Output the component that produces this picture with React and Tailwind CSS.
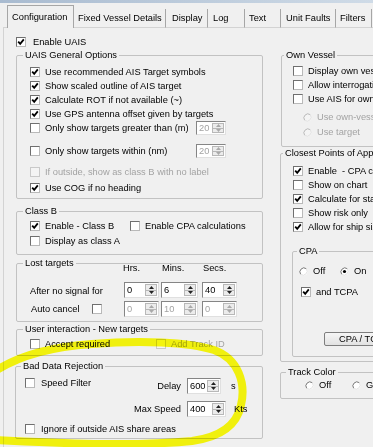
import clsx from "clsx"

function Check({ checked, disabled }) {
  return (
    <span
      className={clsx(
        "relative flex w-[10px] h-[10px] shrink-0 border",
        disabled
          ? "border-[#c9c9c9] bg-[#f4f4f4]"
          : "border-t-[#6f6f6f] border-l-[#6f6f6f] border-b-[#b9b9b9] border-r-[#b9b9b9] bg-white"
      )}
    >
      {checked ? (
        <svg width="8" height="8" viewBox="0 0 8 8" className="absolute left-0 top-0">
          <path d="M1.2 3.6 L3.2 5.8 L6.8 1.4" stroke="#000" strokeWidth="1.8" fill="none" />
        </svg>
      ) : null}
    </span>
  )
}

function Radio({ checked, disabled }) {
  return (
    <svg width="9" height="9" viewBox="0 0 9 9" className="shrink-0">
      <circle cx="4.5" cy="4.5" r="4" fill={disabled ? "#f4f4f4" : "#fff"} />
      <path d="M7.3 1.7 A4 4 0 0 0 1.7 7.3" stroke={disabled ? "#b8b8b8" : "#747474"} fill="none" />
      <path d="M1.7 7.3 A4 4 0 0 0 7.3 1.7" stroke="#e2e2e2" fill="none" />
      {checked ? <circle cx="4.5" cy="4.5" r="1.6" fill="#000" /> : null}
    </svg>
  )
}

function CheckRow({ checked, disabled, label, className, gap = "ml-[5px]" }) {
  return (
    <div className={clsx("h-[14px] flex items-center", className)}>
      <Check checked={checked} disabled={disabled} />
      <span className={clsx("whitespace-pre", gap, disabled && "text-[#a3a3a3]")}>{label}</span>
    </div>
  )
}

function RadioRow({ checked, disabled, label, className }) {
  return (
    <div className={clsx("h-[14px] flex items-center", className)}>
      <Radio checked={checked} disabled={disabled} />
      <span className={clsx("ml-[5px] whitespace-nowrap", disabled && "text-[#a3a3a3]")}>{label}</span>
    </div>
  )
}

function Spin({ value, w, h = "h-[14px]", disabled, className }) {
  const c = disabled ? "#a9a9a9" : "#222"
  return (
    <div
      className={clsx(
        "flex shrink-0 border border-t-[#858585] border-l-[#858585] border-b-[#e0e0e0] border-r-[#e0e0e0] bg-white",
        w,
        h,
        className
      )}
    >
      <span className={clsx("flex-1 pl-[2px] flex items-center", disabled && "text-[#a3a3a3]")}>{value}</span>
      <div className="w-[12px] my-[1px] mr-[1px] flex flex-col border border-[#b8b8b8] bg-[#ececec]">
        <div className="flex-1 flex items-center justify-center border-b border-[#b8b8b8]">
          <svg width="5" height="3" viewBox="0 0 5 3">
            <path d="M0 3 L2.5 0 L5 3Z" fill={c} />
          </svg>
        </div>
        <div className="flex-1 flex items-center justify-center">
          <svg width="5" height="3" viewBox="0 0 5 3">
            <path d="M0 0 L2.5 3 L5 0Z" fill={c} />
          </svg>
        </div>
      </div>
    </div>
  )
}

function Group({ title, className, legend = "ml-[6px]", children }) {
  return (
    <fieldset className={clsx("border border-[#c2c2c2] rounded-[2px] min-w-0 shrink-0", className)}>
      <legend className={clsx("px-[2px] leading-[12px] whitespace-nowrap", legend)}>{title}</legend>
      {children}
    </fieldset>
  )
}

const tabs = [
  { label: "Fixed Vessel Details", cls: "w-[92px] pl-[4px]" },
  { label: "Display", cls: "w-[42px] pl-[6px]" },
  { label: "Log", cls: "w-[37px] pl-[5px]" },
  { label: "Text", cls: "w-[36px] pl-[4px]" },
  { label: "Unit Faults", cls: "w-[55px] pl-[5px]" },
  { label: "Filters", cls: "w-[36px] pl-[4px]" },
]

export default function App() {
  return (
    <div className="relative w-[373px] h-[447px] overflow-hidden bg-[#f0f0f0] text-black font-['Liberation_Sans',Arial,sans-serif] text-[9.3px] leading-[14px]">
      <div className="h-[3px] bg-gradient-to-r from-[#a9bbd0] to-[#cfdbe7]" />

      {/* tab strip */}
      <div className="flex items-end h-[25px]">
        <div className="w-[3px] h-full shrink-0" />
        <div className="w-[4px] self-stretch border-b border-l border-[#d3d3d3] shrink-0 mt-[24px]" />
        <div className="h-[23px] w-[67px] border-l border-t border-r border-[#a6a6a6] pl-[4px] pt-[4px] shrink-0">
          Configuration
        </div>
        {tabs.map((t) => (
          <div
            key={t.label}
            className={clsx(
              "h-[19px] border-r border-r-[#a6a6a6] border-b border-b-[#d3d3d3] pt-[2px] shrink-0 whitespace-nowrap",
              t.cls
            )}
          >
            {t.label}
          </div>
        ))}
        <div className="flex-1 border-b border-[#d3d3d3]" />
      </div>

      <div className="flex ml-[3px] h-[419px] pt-[1px] border-l border-[#d3d3d3]">
        {/* left column */}
        <div className="w-[247px] ml-[12px] flex flex-col shrink-0">
          <CheckRow className="mt-[6px]" checked label="Enable UAIS" gap="ml-[7px]" />

          <Group title="UAIS General Options" className="h-[150px]">
            <div className="pl-[13px]">
              <CheckRow className="mt-[4px]" checked label="Use recommended AIS Target symbols" />
              <CheckRow checked label="Show scaled outline of AIS target" />
              <CheckRow checked label="Calculate ROT if not available (~)" />
              <CheckRow checked label="Use GPS antenna offset given by targets" />
              <div className="h-[14px] flex items-center">
                <Check />
                <span className="ml-[5px] w-[151px] whitespace-nowrap">Only show targets greater than (m)</span>
                <Spin value="20" w="w-[30px]" disabled />
              </div>
              <div className="mt-[9px] h-[14px] flex items-center">
                <Check />
                <span className="ml-[5px] w-[151px] whitespace-nowrap">Only show targets within (nm)</span>
                <Spin value="20" w="w-[30px]" disabled />
              </div>
              <CheckRow className="mt-[7px]" disabled label="If outside, show as class B with no label" />
              <CheckRow className="mt-[2px]" checked label="Use COG if no heading" />
            </div>
          </Group>

          <Group title="Class B" className="mt-[6px] h-[50px]">
            <div className="pl-[13px]">
              <div className="mt-[2px] flex">
                <div className="w-[100px]">
                  <CheckRow checked label="Enable - Class B" />
                </div>
                <CheckRow label="Enable CPA calculations" />
              </div>
              <CheckRow className="mt-[1px]" label="Display as class A" />
            </div>
          </Group>

          <Group title="Lost targets" className="mt-[2px] h-[65px]">
            <div className="pl-[13px]">
              <div className="-mt-[7px] h-[12px] leading-[12px] flex">
                <span className="ml-[93px] w-[39px]">Hrs.</span>
                <span className="w-[41px]">Mins.</span>
                <span>Secs.</span>
              </div>
              <div className="mt-[8px] h-[16px] flex items-center">
                <span className="w-[94px] pt-[2px] whitespace-nowrap">After no signal for</span>
                <Spin value="0" w="w-[35px]" h="h-[16px]" />
                <Spin value="6" w="w-[37px]" h="h-[16px]" className="ml-[2px]" />
                <Spin value="40" w="w-[35px]" h="h-[16px]" className="ml-[4px]" />
              </div>
              <div className="mt-[3px] h-[16px] flex items-center">
                <span className="ml-[1px] w-[61px] whitespace-nowrap">Auto cancel</span>
                <Check />
                <span className="w-[22px] shrink-0" />
                <Spin value="0" w="w-[35px]" h="h-[16px]" disabled />
                <Spin value="10" w="w-[37px]" h="h-[16px]" className="ml-[2px]" disabled />
                <Spin value="0" w="w-[35px]" h="h-[16px]" className="ml-[4px]" disabled />
              </div>
            </div>
          </Group>

          <Group title="User interaction - New targets" className="mt-[1px] h-[33px]">
            <div className="pl-[13px] mt-[2px] flex">
              <div className="w-[126px]">
                <CheckRow label="Accept required" />
              </div>
              <CheckRow disabled label="Add Track ID" />
            </div>
          </Group>

          <Group title="Bad Data Rejection" className="mt-[4px] -ml-[1px] w-[248px] h-[79px]" legend="ml-[5px]">
            <div className="pl-[9px]">
              <div className="mt-[4px] flex items-start">
                <div className="w-[120px]">
                  <CheckRow label="Speed Filter" gap="ml-[6px]" />
                </div>
                <div className="mt-[2px] h-[16px] flex items-center">
                  <span className="w-[36px] text-right">Delay</span>
                  <Spin value="600" w="w-[34px]" h="h-[16px]" className="ml-[6px]" />
                  <span className="ml-[10px]">s</span>
                </div>
              </div>
              <div className="mt-[7px] h-[16px] flex items-center">
                <span className="w-[156px] text-right">Max Speed</span>
                <Spin value="400" w="w-[39px]" h="h-[16px]" className="ml-[6px]" />
                <span className="ml-[8px]">Kts</span>
              </div>
              <CheckRow className="mt-[5px]" label="Ignore if outside AIS share areas" gap="ml-[6px]" />
            </div>
          </Group>
        </div>

        {/* right column */}
        <div className="w-[140px] ml-[17px] flex flex-col shrink-0">
          <Group title="Own Vessel" className="mt-[20px] h-[98px] ml-[1px]" legend="ml-[2px]">
            <div className="pl-[11px]">
              <CheckRow className="mt-[3px]" label="Display own vessel data" />
              <CheckRow label="Allow interrogation of targets" />
              <CheckRow label="Use AIS for own vessel" />
              <RadioRow className="mt-[4px] ml-[10px]" disabled label="Use own-vessel position" />
              <RadioRow className="mt-[1px] ml-[10px]" disabled label="Use target" />
            </div>
          </Group>

          <Group title="Closest Points of Approach" className="h-[215px]" legend="ml-[2px]">
            <div className="pl-[12px]">
              <CheckRow className="mt-[5px]" checked label="Enable  - CPA calculations" />
              <CheckRow label="Show on chart" />
              <CheckRow checked label="Calculate for stationary" />
              <CheckRow label="Show risk only" />
              <CheckRow checked label="Allow for ship size" />

              <Group title="CPA" className="mt-[11px] -ml-[1px] h-[112px]" legend="ml-[4px]">
                <div className="pl-[6px]">
                  <div className="mt-[7px] flex">
                    <div className="w-[41px]">
                      <RadioRow label="Off" />
                    </div>
                    <RadioRow checked label="On" />
                  </div>
                  <CheckRow className="mt-[7px] ml-[2px]" checked label="and TCPA" />
                  <div className="mt-[33px] ml-[25px] h-[14px] w-[120px] pl-[14px] leading-[12px] border border-[#7e7e7e] rounded-[2px] bg-gradient-to-b from-[#f6f6f6] to-[#e2e2e2] whitespace-nowrap">
                    CPA / TCPA Alarm
                  </div>
                </div>
              </Group>
            </div>
          </Group>

          <Group title="Track Color" className="mt-[4px] h-[33px]" legend="ml-[5px]">
            <div className="pl-[24px] flex">
              <div className="w-[47px]">
                <RadioRow label="Off" />
              </div>
              <RadioRow label="Green" />
            </div>
          </Group>
        </div>
      </div>

      {/* hand-drawn highlight */}
      <svg
        className="absolute inset-0 pointer-events-none mix-blend-multiply"
        width="373"
        height="447"
        viewBox="0 0 373 447"
      >
        <path
          d="M-6 372 C 16 357, 48 347, 92 344 C 140 340, 188 342, 214 350 C 239 359, 246 384, 241 405 C 237 425, 221 437, 192 441 C 130 447, 60 443, -6 440"
          stroke="#ffff0e"
          strokeWidth="8"
          strokeLinecap="round"
          fill="none"
        />
      </svg>
    </div>
  )
}
